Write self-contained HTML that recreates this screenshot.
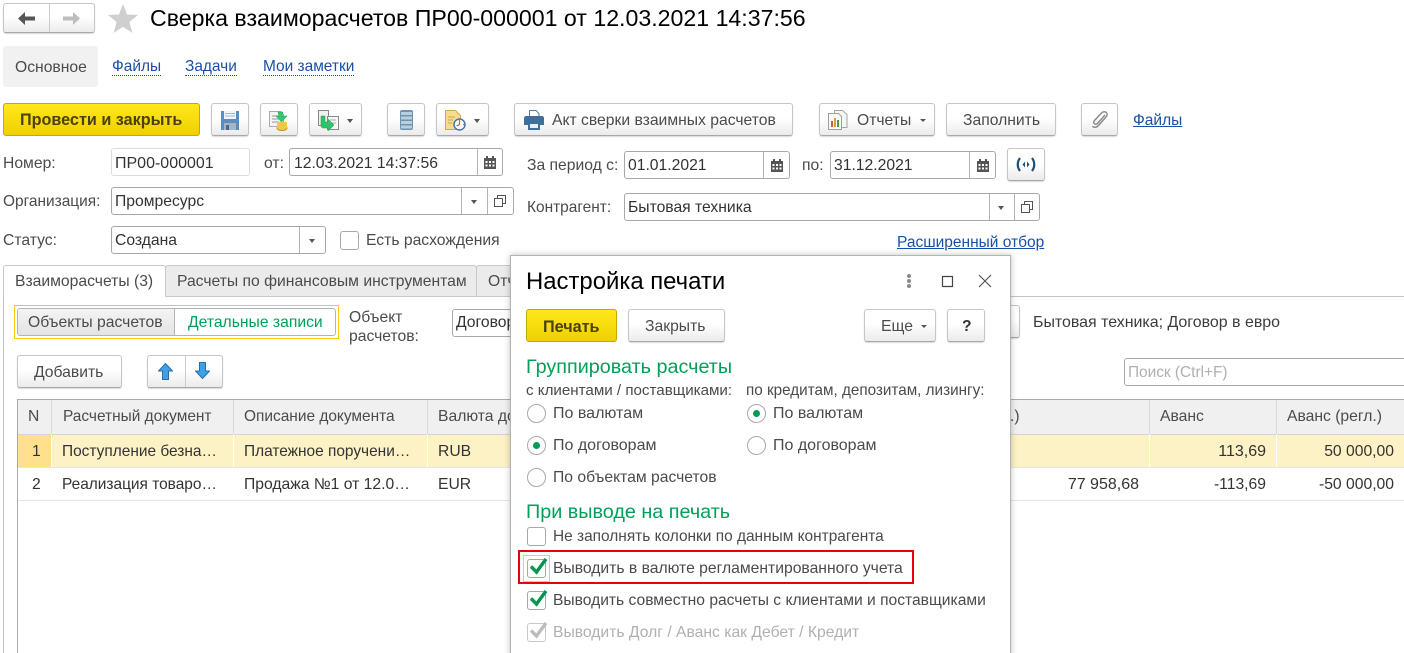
<!DOCTYPE html>
<html lang="ru"><head><meta charset="utf-8"><title>Сверка</title>
<style>
html,body{margin:0;padding:0;background:#fff}
#p{position:relative;width:1404px;height:653px;overflow:hidden;background:#fff;font-family:"Liberation Sans",Arial,sans-serif;font-size:15.7px;color:#4b4b4b}
#p div,#p svg,#p span.t{position:absolute}
.t{white-space:nowrap;line-height:20px;height:20px;margin-top:2px}
.s{font-size:15.45px}
.w{font-size:16px}
.b{box-sizing:border-box;border:1px solid #c6c6c6;border-bottom-color:#a8a8a8;border-radius:3px;background:linear-gradient(#fff,#fff 45%,#ebebeb);box-shadow:0 1px 1px rgba(0,0,0,.15)}
.y{box-sizing:border-box;border:1px solid #c9a900;border-radius:3px;background:linear-gradient(#ffe81c,#f0d000)}
.f{box-sizing:border-box;border:1px solid #a8a8a8;border-radius:3px;background:#fff}
.v{width:1px;background:#b4b4b4}
.l{color:#1a4fa8;text-decoration:underline;font-size:15.5px}
.ld{color:#1a4fa8;border-bottom:1px dotted #1a4fa8;height:17px!important;line-height:18px!important;font-size:15.45px}
.d{color:#333}
.g{color:#00a05a}
.h{font-size:19.8px;margin-top:1px}
.r{box-sizing:border-box;width:19px;height:19px;border:1px solid #a8a8a8;border-radius:50%;background:#fff}
.r i{position:absolute;left:5px;top:5px;width:7px;height:7px;border-radius:50%;background:#009b55}
.c{box-sizing:border-box;width:19px;height:19px;border:1px solid #a8a8a8;border-radius:3px;background:#fff}
.tr{border-left:3.5px solid transparent;border-right:3.5px solid transparent;border-top:4px solid #555;width:0;height:0}
.th{background:#f0f0f0}
</style></head><body><div id="p">

<!-- nav -->
<div class="b" style="left:3px;top:3px;width:92px;height:30px"></div>
<div class="v" style="left:49px;top:4px;height:28px;background:#ccc"></div>
<svg style="left:18px;top:12px" width="18" height="13" viewBox="0 0 18 13"><path d="M7 0 0 6.500 7 13V8.500h10v-4H7z" fill="#555"/></svg>
<svg style="left:62px;top:12px" width="18" height="13" viewBox="0 0 18 13"><path d="M11 0l7 6.500-7 6.500V8.500H1v-4h10z" fill="#bdbdbd"/></svg>
<svg style="left:108px;top:4px" width="30" height="29" viewBox="0 0 30 29"><path d="M15 0l4 10.500 11 .5-8.600 7 3 11L15 22.800 5.600 29l3-11L0 11l11-.5z" fill="#cfcfcf"/></svg>
<span class="t" style="left:150px;top:4px;height:28px;line-height:28px;font-size:23.15px;color:#000;margin-top:0">Сверка взаиморасчетов ПР00-000001 от 12.03.2021 14:37:56</span>

<!-- section tabs -->
<div style="left:3px;top:46px;width:95px;height:41px;background:#f1f1f1;border-radius:3px"></div>
<span class="t" style="left:15px;top:56px">Основное</span>
<span class="t ld" style="left:112px;top:56px">Файлы</span>
<span class="t ld" style="left:185px;top:56px">Задачи</span>
<span class="t ld" style="left:263px;top:56px">Мои заметки</span>

<!-- command bar -->
<div class="y" style="left:3px;top:103px;width:197px;height:33px"></div>
<span class="t" style="left:20px;top:108px;font-weight:bold;font-size:16.2px;color:#4a4208">Провести и закрыть</span>

<div class="b" style="left:211px;top:103px;width:38px;height:33px"></div>
<svg style="left:221px;top:110px" width="18" height="20" viewBox="0 0 18 20"><path d="M0 1h18v19H0z" fill="#5b8dc0"/><path d="M3 1h12v8H3z" fill="#f2f5f8"/><path d="M4 3.500h10M4 6h10" stroke="#9db8d2"/><path d="M3 13h12v7H3z" fill="#a8b4be"/><path d="M5 15h3v5H5z" fill="#3f6a94"/></svg>

<div class="b" style="left:260px;top:103px;width:38px;height:33px"></div>
<svg style="left:269px;top:109px" width="20" height="22" viewBox="0 0 20 22"><path d="M.5 2.500h11l3 3v12H.5z" fill="#f4f4f4" stroke="#aaa"/><path d="M3 7h7M3 10h7M3 13h7" stroke="#999"/><ellipse cx="13" cy="19" rx="5" ry="2.600" fill="#eec94a" stroke="#b99520"/><path d="M8 13h10v6c-2 2-8 2-10 0z" fill="#eec94a"/><path d="M9 3h5l-1 4h5l-5.500 6L7 7h3z" fill="#2ecb6e" stroke="#1d9a50" stroke-width=".5"/></svg>

<div class="b" style="left:309px;top:103px;width:53px;height:33px"></div>
<svg style="left:318px;top:110px" width="22" height="21" viewBox="0 0 22 21"><path d="M.5.500h10v15H.5z" fill="#f0f0f0" stroke="#888"/><path d="M9.500 6.500h11v13h-11z" fill="#f7f7f7" stroke="#888"/><path d="M12 10h6M12 13h6" stroke="#aaa"/><path d="M3 6h4v6h3V9l6 6-6 6v-3H5c-1 0-2-1-2-2z" fill="#2fc46a" stroke="#1f9a50" stroke-width=".5"/></svg>
<div class="tr" style="left:347px;top:119px"></div>

<div class="b" style="left:387px;top:103px;width:38px;height:33px"></div>
<svg style="left:400px;top:110px" width="13" height="20" viewBox="0 0 13 20"><rect width="13" height="20" rx="2" fill="#6f93ad"/><path d="M1 2h11v3H1zM1 6.500h11v3H1zM1 11h11v3H1zM1 15.500h11v3H1z" fill="#b9cfdf"/></svg>

<div class="b" style="left:436px;top:103px;width:53px;height:33px"></div>
<svg style="left:445px;top:110px" width="21" height="21" viewBox="0 0 21 21"><path d="M.5.500h10l5 5v14H.5z" fill="#f6dc8e" stroke="#cfaa50"/><path d="M3 7h7M3 10h5M3 13h4" stroke="#c9a64c"/><circle cx="14.500" cy="14.500" r="5.500" fill="#fff" stroke="#4a78ac" stroke-width="1.500"/><path d="M14.500 11v3.500l-3 1.500M14.500 9.500v1.500M19.500 14.500H18" stroke="#d9534f" stroke-width="1.200" fill="none"/></svg>
<div class="tr" style="left:474px;top:119px"></div>

<div class="b" style="left:514px;top:103px;width:279px;height:33px"></div>
<svg style="left:524px;top:110px" width="20" height="20" viewBox="0 0 20 20"><path d="M5.500.5h6.500l3 3v5H5.500z" fill="#fff" stroke="#5d7f9e"/><path d="M0 8c0-1 1-2 2-2h16c1 0 2 1 2 2v7h-4v-2H4v2H0z" fill="#3f6f9b"/><path d="M4 13h12v7H4z" fill="#3f6f9b"/><path d="M6 14h8v4H6z" fill="#e9eff5"/></svg>
<span class="t" style="left:552px;top:109px">Акт сверки взаимных расчетов</span>

<div class="b" style="left:819px;top:103px;width:116px;height:33px"></div>
<svg style="left:828px;top:109px" width="20" height="21" viewBox="0 0 20 21"><path d="M6.500 1.500h8l4.500 4v13H6.500z" fill="#f4f6f4" stroke="#a0a8a0"/><path d="M.5 4.500h10l3 3v13H.5z" fill="#fafafa" stroke="#9aa09a"/><path d="M3 12h2v6H3z" fill="#d9534f"/><path d="M6 9h2v9H6z" fill="#e0a030"/><path d="M9 11h2v7H9z" fill="#4a9a50"/></svg>
<span class="t" style="left:857px;top:109px">Отчеты</span>
<div class="tr" style="left:920px;top:119px;border-left-width:3px;border-right-width:3px;border-top-width:3px"></div>

<div class="b" style="left:946px;top:103px;width:110px;height:33px"></div>
<span class="t" style="left:963px;top:109px">Заполнить</span>

<div class="b" style="left:1081px;top:103px;width:37px;height:33px"></div>
<svg style="left:1091px;top:110px" width="17" height="19" viewBox="0 0 17 19"><path d="M14 5 6.500 13.500c-1 1-2.600 1-3.300 0-.8-.8-.6-2 .3-3L10.500 3c1.700-1.700 3.700-1.600 4.800-.5 1.200 1.200 1.100 3-.4 4.600L7.500 15.500c-2 2.200-4.500 2.300-6 .8" fill="none" stroke="#8c8c8c" stroke-width="1.500"/></svg>
<span class="t l" style="left:1133px;top:109px">Файлы</span>

<!-- form left -->
<span class="t" style="left:3px;top:152px">Номер:</span>
<div class="f" style="left:111px;top:148px;width:139px;height:28px;border-color:#dcdcdc"></div>
<span class="t d" style="left:115px;top:152px;font-size:16px">ПР00-000001</span>
<span class="t" style="left:264px;top:152px">от:</span>
<div class="f" style="left:289px;top:148px;width:214px;height:28px"></div>
<div class="v" style="left:477px;top:149px;height:26px"></div>
<span class="t d" style="left:294px;top:152px">12.03.2021 14:37:56</span>
<svg style="left:484px;top:156px" width="12" height="13" viewBox="0 0 12 13"><path d="M0 2h12v11H0z" fill="#555"/><path d="M2 0h2v3H2zM8 0h2v3H8z" fill="#555"/><path d="M1.500 5h2v2h-2zM5 5h2v2H5zM8.500 5h2v2h-2zM1.500 8.500h2v2h-2zM5 8.500h2v2H5zM8.500 8.500h2v2h-2z" fill="#fff"/></svg>

<span class="t s" style="left:3px;top:190px">Организация:</span>
<div class="f" style="left:111px;top:187px;width:403px;height:28px"></div>
<div class="v" style="left:461px;top:188px;height:26px"></div>
<div class="v" style="left:487px;top:188px;height:26px"></div>
<span class="t d" style="left:115px;top:190px">Промресурс</span>
<div class="tr" style="left:471px;top:200px"></div>
<svg style="left:494px;top:195px" width="12" height="12" viewBox="0 0 12 12"><path d="M3.500 3.500v-3h8v8h-3M.5 3.500h8v8h-8z" fill="none" stroke="#555"/></svg>

<span class="t" style="left:3px;top:229px">Статус:</span>
<div class="f" style="left:111px;top:226px;width:215px;height:28px"></div>
<div class="v" style="left:299px;top:227px;height:26px"></div>
<span class="t d" style="left:115px;top:229px">Создана</span>
<div class="tr" style="left:309px;top:239px"></div>
<div class="c" style="left:340px;top:231px"></div>
<span class="t" style="left:366px;top:229px">Есть расхождения</span>

<!-- form right -->
<span class="t" style="left:527px;top:154px">За период с:</span>
<div class="f" style="left:624px;top:151px;width:166px;height:28px"></div>
<div class="v" style="left:763px;top:152px;height:26px"></div>
<span class="t d" style="left:628px;top:154px">01.01.2021</span>
<svg style="left:771px;top:159px" width="12" height="13" viewBox="0 0 12 13"><path d="M0 2h12v11H0z" fill="#555"/><path d="M2 0h2v3H2zM8 0h2v3H8z" fill="#555"/><path d="M1.500 5h2v2h-2zM5 5h2v2H5zM8.500 5h2v2h-2zM1.500 8.500h2v2h-2zM5 8.500h2v2H5zM8.500 8.500h2v2h-2z" fill="#fff"/></svg>
<span class="t" style="left:802px;top:154px">по:</span>
<div class="f" style="left:830px;top:151px;width:166px;height:28px"></div>
<div class="v" style="left:969px;top:152px;height:26px"></div>
<span class="t d" style="left:834px;top:154px">31.12.2021</span>
<svg style="left:977px;top:159px" width="12" height="13" viewBox="0 0 12 13"><path d="M0 2h12v11H0z" fill="#555"/><path d="M2 0h2v3H2zM8 0h2v3H8z" fill="#555"/><path d="M1.500 5h2v2h-2zM5 5h2v2H5zM8.500 5h2v2h-2zM1.500 8.500h2v2h-2zM5 8.500h2v2H5zM8.500 8.500h2v2h-2z" fill="#fff"/></svg>
<div class="b" style="left:1007px;top:148px;width:38px;height:33px"></div>
<svg style="left:1016px;top:157px" width="20" height="15" viewBox="0 0 20 15"><path d="M4 1C1 5 1 10 4 14M16 1c3 4 3 9 0 13" fill="none" stroke="#1d4f78" stroke-width="2.200"/><path d="M9 4.500 6.500 7.500 9 10.500zM11 4.500l2.500 3-2.500 3z" fill="#1d4f78"/></svg>

<span class="t s" style="left:527px;top:196px">Контрагент:</span>
<div class="f" style="left:624px;top:193px;width:416px;height:28px"></div>
<div class="v" style="left:989px;top:194px;height:26px"></div>
<div class="v" style="left:1014px;top:194px;height:26px"></div>
<span class="t d" style="left:628px;top:196px">Бытовая техника</span>
<div class="tr" style="left:998px;top:206px"></div>
<svg style="left:1021px;top:201px" width="12" height="12" viewBox="0 0 12 12"><path d="M3.500 3.500v-3h8v8h-3M.5 3.500h8v8h-8z" fill="none" stroke="#555"/></svg>
<span class="t l" style="left:897px;top:231px">Расширенный отбор</span>

<!-- tabs -->
<div style="left:3px;top:296px;width:1401px;height:1px;background:#c4c4c4"></div>
<div style="left:3px;top:296px;width:1px;height:357px;background:#c4c4c4"></div>
<div style="box-sizing:border-box;left:165px;top:265px;width:312px;height:32px;background:#ebebeb;border:1px solid #c8c8c8;border-radius:3px 3px 0 0"></div>
<div style="box-sizing:border-box;left:476px;top:265px;width:60px;height:32px;background:#ebebeb;border:1px solid #c8c8c8;border-radius:3px 3px 0 0"></div>
<div style="box-sizing:border-box;left:3px;top:265px;width:163px;height:32px;background:#fff;border:1px solid #c8c8c8;border-bottom:0;border-radius:3px 3px 0 0"></div>
<span class="t" style="left:15px;top:270px">Взаиморасчеты (3)</span>
<span class="t" style="left:177px;top:270px">Расчеты по финансовым инструментам</span>
<span class="t" style="left:488px;top:270px">Отчет</span>

<!-- toggle -->
<div style="box-sizing:border-box;left:14px;top:305px;width:325px;height:34px;border:1px solid #f5c91e"></div>
<div class="f" style="left:17px;top:308px;width:319px;height:28px;border-color:#b4b4b4"></div>
<div style="left:18px;top:309px;width:156px;height:26px;background:linear-gradient(#f4f4f4,#e4e4e4);border-right:1px solid #b4b4b4;border-radius:2px 0 0 2px"></div>
<span class="t" style="left:28px;top:311px">Объекты расчетов</span>
<span class="t g" style="left:188px;top:311px">Детальные записи</span>

<span class="t" style="left:349px;top:306px">Объект</span>
<span class="t" style="left:349px;top:325px">расчетов:</span>
<div class="f" style="left:452px;top:309px;width:90px;height:28px"></div>
<span class="t d" style="left:456px;top:311px">Договор</span>

<div class="b" style="left:1000px;top:305px;width:20px;height:33px"></div>
<span class="t" style="left:1033px;top:311px;color:#3c3c3c;font-size:15.95px">Бытовая техника; Договор в евро</span>

<!-- table toolbar -->
<div class="b" style="left:17px;top:355px;width:105px;height:33px"></div>
<span class="t" style="left:34px;top:361px">Добавить</span>
<div class="b" style="left:147px;top:355px;width:76px;height:33px"></div>
<div class="v" style="left:185px;top:356px;height:31px;background:#ccc"></div>
<svg style="left:158px;top:363px" width="15" height="17" viewBox="0 0 15 17"><path d="M7.500.5 14.500 8H10.500v8.500h-6V8H.5z" fill="#3fa0e6" stroke="#2a6ea8"/></svg>
<svg style="left:195px;top:362px" width="15" height="17" viewBox="0 0 15 17"><path d="M7.500 16.500 14.500 9H10.500V.5h-6V9H.5z" fill="#3fa0e6" stroke="#2a6ea8"/></svg>
<div class="f" style="left:1124px;top:358px;width:290px;height:28px"></div>
<span class="t" style="left:1128px;top:361px;color:#b0b0b0;font-size:15.4px">Поиск (Ctrl+F)</span>

<!-- table -->
<div style="left:17px;top:399px;width:1387px;height:1px;background:#aaa"></div>
<div style="left:17px;top:399px;width:1px;height:254px;background:#aaa"></div>
<div class="th" style="left:18px;top:400px;width:1386px;height:34px"></div>
<div style="left:18px;top:434px;width:1386px;height:1px;background:#d4d4d4"></div>
<div style="left:18px;top:435px;width:1386px;height:32px;background:#fdf1c6"></div>
<div style="left:18px;top:435px;width:33px;height:32px;background:#ffe08c"></div>
<div style="left:18px;top:467px;width:1386px;height:1px;background:#e6e6e6"></div>
<div style="left:18px;top:500px;width:1386px;height:1px;background:#e6e6e6"></div>
<div style="left:51px;top:400px;width:1px;height:67px;background:#fff"></div>
<div style="left:233px;top:400px;width:1px;height:67px;background:#fff"></div>
<div style="left:427px;top:400px;width:1px;height:67px;background:#fff"></div>
<div style="left:1149px;top:400px;width:1px;height:67px;background:#fff"></div>
<div style="left:1276px;top:400px;width:1px;height:67px;background:#fff"></div>
<div style="left:51px;top:400px;width:1px;height:34px;background:#d8d8d8"></div>
<div style="left:233px;top:400px;width:1px;height:34px;background:#d8d8d8"></div>
<div style="left:427px;top:400px;width:1px;height:34px;background:#d8d8d8"></div>
<div style="left:1149px;top:400px;width:1px;height:34px;background:#d8d8d8"></div>
<div style="left:1276px;top:400px;width:1px;height:34px;background:#d8d8d8"></div>

<span class="t" style="left:28px;top:405px">N</span>
<span class="t s" style="left:63px;top:405px">Расчетный документ</span>
<span class="t s" style="left:244px;top:405px">Описание документа</span>
<span class="t" style="left:438px;top:405px">Валюта договора</span>
<span class="t" style="left:1010px;top:405px">.)</span>
<span class="t" style="left:1160px;top:405px">Аванс</span>
<span class="t" style="left:1287px;top:405px">Аванс (регл.)</span>

<span class="t d" style="left:32px;top:440px">1</span>
<span class="t d s" style="left:62px;top:440px">Поступление безна…</span>
<span class="t d s" style="left:244px;top:440px">Платежное поручени…</span>
<span class="t d" style="left:438px;top:440px">RUB</span>
<span class="t d w" style="right:138px;top:440px">113,69</span>
<span class="t d" style="right:10px;top:440px">50 000,00</span>

<span class="t d" style="left:32px;top:473px">2</span>
<span class="t d s" style="left:62px;top:473px">Реализация товаро…</span>
<span class="t d" style="left:244px;top:473px">Продажа №1 от 12.0…</span>
<span class="t d" style="left:438px;top:473px">EUR</span>
<span class="t d w" style="right:265px;top:473px">77 958,68</span>
<span class="t d" style="right:138px;top:473px">-113,69</span>
<span class="t d" style="right:10px;top:473px">-50 000,00</span>

<!-- dialog -->
<div style="box-sizing:border-box;left:510px;top:255px;width:501px;height:410px;background:#fff;border:1px solid #b4b4b4;box-shadow:0 0 6px rgba(0,0,0,.25)"></div>
<span class="t" style="left:526px;top:267px;height:28px;line-height:28px;font-size:23.9px;color:#000;margin-top:1px">Настройка печати</span>
<svg style="left:906px;top:274px" width="6" height="14" viewBox="0 0 6 14"><circle cx="3" cy="2" r="2" fill="#8a8a8a"/><circle cx="3" cy="7" r="2" fill="#8a8a8a"/><circle cx="3" cy="12" r="2" fill="#8a8a8a"/></svg>
<svg style="left:941px;top:275px" width="13" height="13" viewBox="0 0 13 13"><path d="M1.500 1.500h10v10h-10z" fill="none" stroke="#444" stroke-width="1.200"/></svg>
<svg style="left:978px;top:274px" width="14" height="14" viewBox="0 0 14 14"><path d="M1 1l12 12M13 1 1 13" stroke="#555" stroke-width="1.200"/></svg>

<div class="y" style="left:526px;top:309px;width:91px;height:33px"></div>
<span class="t" style="left:543px;top:315px;font-weight:bold;font-size:16.2px;color:#4a4208">Печать</span>
<div class="b" style="left:628px;top:309px;width:97px;height:33px"></div>
<span class="t" style="left:645px;top:315px">Закрыть</span>
<div class="b" style="left:864px;top:309px;width:72px;height:33px"></div>
<span class="t" style="left:881px;top:315px">Еще</span>
<div class="tr" style="left:921px;top:325px;border-left-width:3px;border-right-width:3px;border-top-width:3px"></div>
<div class="b" style="left:947px;top:309px;width:38px;height:33px"></div>
<span class="t" style="left:962px;top:315px;font-weight:bold;color:#333">?</span>

<span class="t g h" style="left:526px;top:356px">Группировать расчеты</span>
<span class="t" style="left:526px;top:379px;font-size:15.15px">с клиентами / поставщиками:</span>
<span class="t" style="left:746px;top:379px;font-size:15.25px">по кредитам, депозитам, лизингу:</span>

<div class="r" style="left:527px;top:404px"></div>
<span class="t w" style="left:553px;top:402px">По валютам</span>
<div class="r" style="left:527px;top:436px"><i></i></div>
<span class="t w" style="left:553px;top:434px">По договорам</span>
<div class="r" style="left:527px;top:468px"></div>
<span class="t" style="left:553px;top:466px">По объектам расчетов</span>
<div class="r" style="left:747px;top:404px"><i></i></div>
<span class="t w" style="left:773px;top:402px">По валютам</span>
<div class="r" style="left:747px;top:436px"></div>
<span class="t w" style="left:773px;top:434px">По договорам</span>

<span class="t g h" style="left:526px;top:501px">При выводе на печать</span>

<div class="c" style="left:527px;top:527px"></div>
<span class="t s" style="left:553px;top:525px">Не заполнять колонки по данным контрагента</span>

<div style="box-sizing:border-box;left:518px;top:550px;width:396px;height:34px;border:2px solid #e8000b"></div>
<div style="box-sizing:border-box;left:523px;top:555px;width:27px;height:27px;border:1px solid #f5c94e"></div>
<div class="c" style="left:527px;top:559px"></div>
<svg style="left:529px;top:557px" width="19" height="18" viewBox="0 0 19 18"><path d="M2 9.500 7.500 15 17 2" fill="none" stroke="#00964f" stroke-width="3.400"/></svg>
<span class="t" style="left:553px;top:557px">Выводить в валюте регламентированного учета</span>

<div class="c" style="left:527px;top:591px"></div>
<svg style="left:529px;top:589px" width="19" height="18" viewBox="0 0 19 18"><path d="M2 9.500 7.500 15 17 2" fill="none" stroke="#00964f" stroke-width="3.400"/></svg>
<span class="t" style="left:553px;top:589px;font-size:15.62px">Выводить совместно расчеты с клиентами и поставщиками</span>

<div class="c" style="left:527px;top:623px;border-color:#c8c8c8"></div>
<svg style="left:529px;top:621px" width="19" height="18" viewBox="0 0 19 18"><path d="M2 9.500 7.500 15 17 2" fill="none" stroke="#bdbdbd" stroke-width="3.400"/></svg>
<span class="t" style="left:553px;top:621px;color:#b0b0b0">Выводить Долг / Аванс как Дебет / Кредит</span>

</div></body></html>
